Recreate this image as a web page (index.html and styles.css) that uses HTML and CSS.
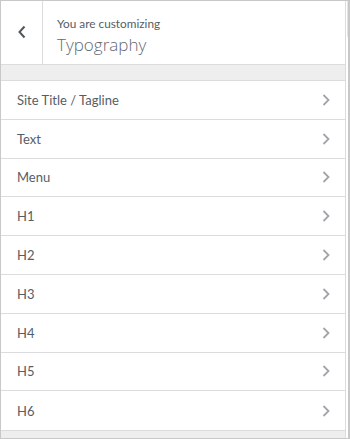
FILE: index.html
```html
<!DOCTYPE html>
<html>
<head>
<meta charset="utf-8">
<link rel="stylesheet" href="styles.css">
</head>
<body>
<div class="window">
  <div class="panel">
    <div class="header">
      <div class="back">
        <svg width="10" height="14" viewBox="0 0 10 14"><path d="M7.5 1.5 L2.5 7 L7.5 12.5" fill="none" stroke="#50575e" stroke-width="2"/></svg>
      </div>
      <div class="titles">
        <div class="sub">You are customizing</div>
        <div class="title">Typography</div>
      </div>
    </div>
    <div class="strip"></div>
    <ul class="list">
      <li class="item"><span>Site Title / Tagline</span><svg class="chev" width="8" height="12" viewBox="0 0 8 12"><path d="M1.5 1 L6.5 6 L1.5 11" fill="none" stroke="#a0a5aa" stroke-width="1.8"/></svg></li>
      <li class="item"><span>Text</span><svg class="chev" width="8" height="12" viewBox="0 0 8 12"><path d="M1.5 1 L6.5 6 L1.5 11" fill="none" stroke="#a0a5aa" stroke-width="1.8"/></svg></li>
      <li class="item"><span>Menu</span><svg class="chev" width="8" height="12" viewBox="0 0 8 12"><path d="M1.5 1 L6.5 6 L1.5 11" fill="none" stroke="#a0a5aa" stroke-width="1.8"/></svg></li>
      <li class="item"><span>H1</span><svg class="chev" width="8" height="12" viewBox="0 0 8 12"><path d="M1.5 1 L6.5 6 L1.5 11" fill="none" stroke="#a0a5aa" stroke-width="1.8"/></svg></li>
      <li class="item"><span>H2</span><svg class="chev" width="8" height="12" viewBox="0 0 8 12"><path d="M1.5 1 L6.5 6 L1.5 11" fill="none" stroke="#a0a5aa" stroke-width="1.8"/></svg></li>
      <li class="item"><span>H3</span><svg class="chev" width="8" height="12" viewBox="0 0 8 12"><path d="M1.5 1 L6.5 6 L1.5 11" fill="none" stroke="#a0a5aa" stroke-width="1.8"/></svg></li>
      <li class="item"><span>H4</span><svg class="chev" width="8" height="12" viewBox="0 0 8 12"><path d="M1.5 1 L6.5 6 L1.5 11" fill="none" stroke="#a0a5aa" stroke-width="1.8"/></svg></li>
      <li class="item"><span>H5</span><svg class="chev" width="8" height="12" viewBox="0 0 8 12"><path d="M1.5 1 L6.5 6 L1.5 11" fill="none" stroke="#a0a5aa" stroke-width="1.8"/></svg></li>
      <li class="item"><span>H6</span><svg class="chev" width="8" height="12" viewBox="0 0 8 12"><path d="M1.5 1 L6.5 6 L1.5 11" fill="none" stroke="#a0a5aa" stroke-width="1.8"/></svg></li>
    </ul>
    <div class="foot"></div>
  </div>
  <div class="scrollbar"><div class="thumb"></div></div>
</div>
</body>
</html>
```
FILE: styles.css
```css
* { box-sizing: border-box; }
html, body { margin: 0; padding: 0; background: #fff; }
body { font-family: "Lato", "Open Sans", "Liberation Sans", sans-serif; color: #50575e; }
.window {
  width: 350px;
  height: 439px;
  border-top: 1px solid #c8c8c8;
  border-left: 1px solid #c8c8c8;
  border-bottom: 1px solid #c8c8c8;
  display: flex;
  overflow: hidden;
}
.panel {
  width: 345px;
  border-right: 1px solid #dcdcde;
  display: flex;
  flex-direction: column;
  background: #eee;
}
.scrollbar {
  flex: 1;
  border-right: 2px solid #c8c8c8;
  background: #fff;
  padding-left: 1px;
}
.thumb { height: 36px; background: #e4e4e4; }
.header {
  height: 64px;
  background: #fff;
  border-bottom: 1px solid #dcdcde;
  display: flex;
}
.back {
  width: 42px;
  border-right: 1px solid #dcdcde;
  display: flex;
  align-items: center;
  justify-content: center;
  padding-bottom: 1px;
}
.titles {
  padding: 15px 0 0 14px;
}
.sub { font-size: 11.8px; line-height: 16px; color: #555d66; }
.title { font-family: "Open Sans", sans-serif; font-size: 17px; font-weight: 300; line-height: 24px; margin-top: 1px; color: #646970; }
.strip {
  height: 16px;
  border-bottom: 1px solid #dcdcde;
}
.list { list-style: none; margin: 0; padding: 0; background: #fff; }
.item {
  height: 38.8px;
  border-bottom: 1px solid #dcdcde;
  display: flex;
  align-items: center;
  justify-content: space-between;
  padding: 0 15px 0 16px;
  font-size: 13px;
  font-weight: 400;
  color: #555d66;
}
.item:last-child { border-bottom: none; }
.chev { display: block; }
.foot { flex: 1; border-top: 1px solid #dcdcde; }
```
